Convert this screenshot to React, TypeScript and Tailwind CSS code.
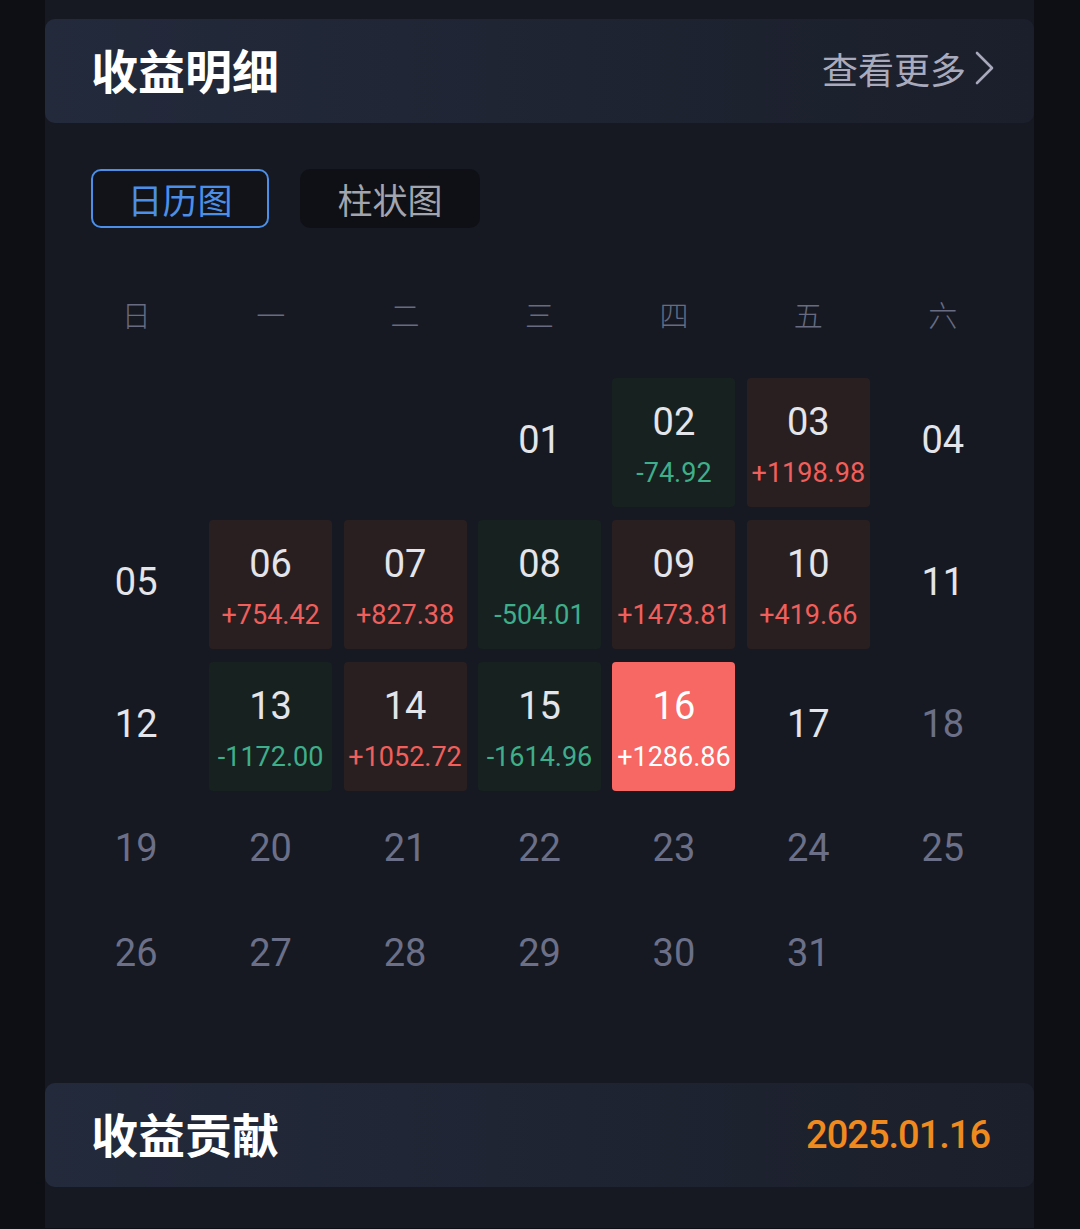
import React from "react";

type Day = { d: number; v?: string; today?: boolean };

const values: Record<number, string> = {
  2: "-74.92",
  3: "+1198.98",
  6: "+754.42",
  7: "+827.38",
  8: "-504.01",
  9: "+1473.81",
  10: "+419.66",
  13: "-1172.00",
  14: "+1052.72",
  15: "-1614.96",
  16: "+1286.86",
};

const weekdays = ["日", "一", "二", "三", "四", "五", "六"];

function buildWeeks(): (Day | null)[][] {
  const cells: (Day | null)[] = [null, null, null];
  for (let d = 1; d <= 31; d++) cells.push({ d, v: values[d], today: d === 16 });
  while (cells.length % 7 !== 0) cells.push(null);
  const weeks: (Day | null)[][] = [];
  for (let i = 0; i < cells.length; i += 7) weeks.push(cells.slice(i, i + 7));
  return weeks;
}

const cjk = { fontFamily: '"Noto Sans CJK SC", "Noto Sans", sans-serif' };
const num = { fontFamily: 'Roboto, "Noto Sans", sans-serif' };

function Cell({ day, tall }: { day: Day | null; tall: boolean }) {
  const h = tall ? "h-[129px]" : "h-[92px]";
  if (!day) return <div className={h} />;
  const pad = (n: number) => (n < 10 ? "0" + n : String(n));
  if (day.v) {
    const pos = day.v.startsWith("+");
    let bg = pos ? "bg-[#2a1f20]" : "bg-[#172120]";
    let vc = pos ? "text-[#f05f5c]" : "text-[#3fae8b]";
    let nc = "text-[#e4e5ea]";
    if (day.today) {
      bg = "bg-[#f76763]";
      vc = "text-white";
      nc = "text-white";
    }
    return (
      <div className={`${h} flex justify-center`}>
        <div className={`w-[123px] h-full rounded-[4px] ${bg} flex flex-col items-center`}>
          <div className={`pt-[22px] text-[38px] leading-[44px] ${nc}`} style={num}>
            {pad(day.d)}
          </div>
          <div className={`mt-[14px] text-[27px] leading-[30px] ${vc}`} style={num}>
            {day.v}
          </div>
        </div>
      </div>
    );
  }
  const dim = day.d >= 18;
  return (
    <div className={`${h} flex items-center justify-center pb-[5px]`}>
      <div
        className={`text-[38px] leading-[44px] ${dim ? "text-[#6b7088]" : "text-[#e4e5ea]"}`}
        style={num}
      >
        {pad(day.d)}
      </div>
    </div>
  );
}

function Chevron() {
  return (
    <svg width="22" height="36" viewBox="0 0 22 36" className="ml-[8px]">
      <polyline
        points="3,3 18,18 3,33"
        fill="none"
        stroke="#a7a9ba"
        strokeWidth="2.6"
        strokeLinecap="round"
        strokeLinejoin="round"
      />
    </svg>
  );
}

export default function App() {
  const weeks = buildWeeks();
  return (
    <div className="min-h-[1229px] bg-[#0d0f14]">
      <div className="ml-[45px] w-[989px] bg-[#161922] pt-[19px] pb-[41px]">
        {/* Header 1 */}
        <div className="h-[104px] rounded-[10px] bg-gradient-to-r from-[#232a3b] to-[#1b1f2b] flex items-center justify-between pl-[46px] pr-[38px]">
          <div className="-mt-[6px] text-[47px] font-semibold text-white leading-none" style={cjk}>
            收益明细
          </div>
          <div className="flex items-center -mt-[6px]">
            <span className="text-[36px] text-[#a9abbc] leading-none" style={cjk}>
              查看更多
            </span>
            <Chevron />
          </div>
        </div>

        <div className="px-[24px]">
          {/* Toggle buttons */}
          <div className="mt-[46px] ml-[22px] flex gap-[31px]">
            <div
              className="w-[178px] h-[59px] rounded-[10px] border-[2.5px] border-[#4b8fe8] bg-[#111319] flex items-center justify-center text-[35px] text-[#4b8fe8] leading-none"
              style={cjk}
            >
              日历图
            </div>
            <div
              className="w-[180px] h-[59px] rounded-[10px] bg-[#0f1015] flex items-center justify-center text-[35px] text-[#a3a5ae] leading-none"
              style={cjk}
            >
              柱状图
            </div>
          </div>

          {/* Weekdays */}
          <div className="mt-[66px] grid grid-cols-7 h-[40px]">
            {weekdays.map((w) => (
              <div
                key={w}
                className="flex items-center justify-center text-[29px] font-light text-[#676c82] leading-none"
                style={cjk}
              >
                {w}
              </div>
            ))}
          </div>

          {/* Calendar */}
          <div className="mt-[44px] flex flex-col gap-[13px]">
            {weeks.map((wk, i) => {
              const tall = i < 3;
              return (
                <div key={i} className="grid grid-cols-7">
                  {wk.map((d, j) => (
                    <Cell key={j} day={d} tall={tall} />
                  ))}
                </div>
              );
            })}
          </div>
        </div>

        {/* Header 2 */}
        <div className="mt-[82px] h-[104px] rounded-[10px] bg-gradient-to-r from-[#232a3b] to-[#1b1f2b] flex items-center justify-between pl-[46px] pr-[44px]">
          <div className="-mt-[5px] text-[47px] font-semibold text-white leading-none" style={cjk}>
            收益贡献
          </div>
          <div className="text-[38px] font-medium text-[#f08a1e] leading-none tracking-[-1px]" style={num}>
            2025.01.16
          </div>
        </div>
      </div>
    </div>
  );
}
